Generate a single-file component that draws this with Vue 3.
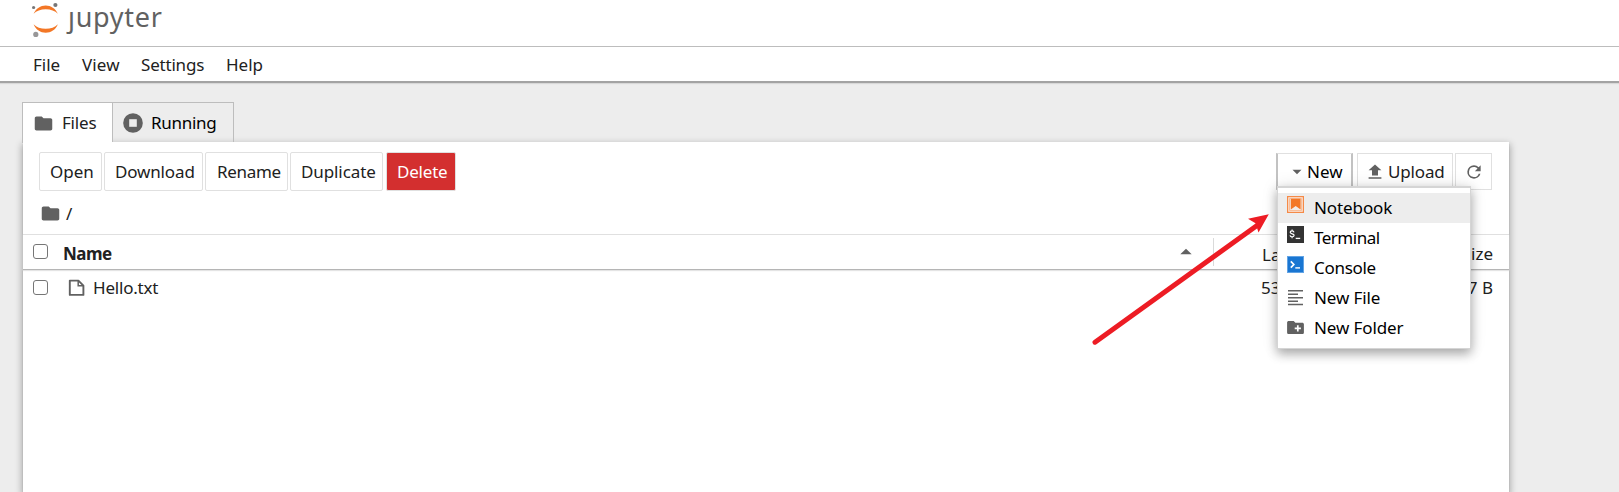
<script setup>
const menus = [
  { label: 'File', cls: 'm-file' },
  { label: 'View', cls: 'm-view' },
  { label: 'Settings', cls: 'm-settings' },
  { label: 'Help', cls: 'm-help' },
]
const actions = [
  { label: 'Open', cls: 'a-open' },
  { label: 'Download', cls: 'a-download' },
  { label: 'Rename', cls: 'a-rename' },
  { label: 'Duplicate', cls: 'a-duplicate' },
  { label: 'Delete', cls: 'a-delete' },
]
const items = [
  { label: 'Notebook', icon: 'notebook' },
  { label: 'Terminal', icon: 'terminal' },
  { label: 'Console', icon: 'console' },
  { label: 'New File', icon: 'text' },
  { label: 'New Folder', icon: 'folder' },
]
const folderPath =
  'M10 4H4c-1.1 0-1.99.9-1.99 2L2 18c0 1.1.9 2 2 2h16c1.1 0 2-.9 2-2V8c0-1.1-.9-2-2-2h-8l-2-2z'
</script>

<template>
  <div class="app">
    <header class="top">
      <svg class="logo" width="30" height="37" viewBox="0 0 30 37">
        <path d="M2.6 13.8C5 8.300 9.500 5.400 14.700 5.400S24.500 8.300 26.900 13.800C24 10.900 19.800 9.300 14.700 9.300S5.500 10.900 2.600 13.800z" fill="#f37726" />
        <path d="M2.600 24.200C5 29.800 9.500 32.700 14.700 32.700S24.500 29.800 26.900 24.200C24 27.100 19.800 28.800 14.700 28.800S5.500 27.100 2.600 24.200z" fill="#f37726" />
        <circle cx="24.400" cy="5" r="2.100" fill="#767677" />
        <circle cx="2.600" cy="7.500" r="1.600" fill="#767677" />
        <circle cx="4.800" cy="34.400" r="2.600" fill="#989798" />
      </svg>
      <span class="brand">&#x237;upyter</span>
    </header>

    <nav class="menubar">
      <span v-for="m in menus" :key="m.label" class="menu" :class="m.cls">{{ m.label }}</span>
    </nav>

    <main class="content">
      <div class="tabs">
        <div class="tab active">
          <svg width="21" height="21" viewBox="0 0 24 24"><path :d="folderPath" fill="#616161" /></svg>
          <span class="t-files">Files</span>
        </div>
        <div class="tab running">
          <svg width="20" height="20" viewBox="0 0 20 20">
            <circle cx="10" cy="10" r="9.800" fill="#616161" />
            <rect x="6.200" y="6.200" width="7.600" height="7.600" fill="#ededed" />
          </svg>
          <span class="t-running">Running</span>
        </div>
      </div>

      <section class="panel">
        <div class="toolbar">
          <button v-for="a in actions" :key="a.label" class="btn" :class="a.cls">{{ a.label }}</button>
          <div class="spacer"></div>
          <div class="right">
            <div class="btn new">
              <svg width="10" height="6" viewBox="0 0 10 6"><path d="M.500.700h9L5 5.300z" fill="#616161" /></svg>
              <span class="t-new">New</span>
              <div class="dropdown">
                <div v-for="(it, i) in items" :key="it.label" class="item" :class="{ hover: i === 0 }">
                  <svg v-if="it.icon === 'notebook'" class="ic" viewBox="0 0 17 17">
                    <rect width="17" height="17" fill="#f58a47" />
                    <rect x="1.200" y="1.200" width="14.600" height="14.600" fill="#fbe8dc" />
                    <rect x="2.200" y="2.200" width="12.600" height="12.600" fill="#f7b48b" />
                    <rect x="3" y="3" width="11" height="11" fill="#f2ebe7" />
                    <path d="M3.800 2.800h9.800v10.800L8.700 9.900 3.800 13.600z" fill="#f37726" />
                  </svg>
                  <svg v-else-if="it.icon === 'terminal'" class="ic" viewBox="0 0 17 17">
                    <rect width="17" height="17" fill="#333" />
                    <path d="M7 6.300C6.800 5.300 6.100 4.900 5.100 4.900 3.900 4.900 3.200 5.400 3.200 6.300c0 2 3.900 1 3.900 3 0 1-.8 1.500-2 1.500-1.100 0-1.900-.5-2.100-1.500M5.100 3.500v1.400M5.100 10.800v1.400" fill="none" stroke="#fff" stroke-width="1.200" />
                    <path d="M8.700 12.400h4.500" stroke="#fff" stroke-width="1.300" />
                  </svg>
                  <svg v-else-if="it.icon === 'console'" class="ic" viewBox="0 0 17 17">
                    <rect width="17" height="17" fill="#62a3e4" />
                    <rect x="1" y="1" width="15" height="15" fill="#1976d2" />
                    <path d="M3.800 5.400l3 3.100-3 3.100" fill="none" stroke="#fff" stroke-width="1.700" />
                    <path d="M8.300 11.900h4.700" stroke="#fff" stroke-width="1.400" />
                  </svg>
                  <svg v-else-if="it.icon === 'text'" class="ic" viewBox="0 0 17 17">
                    <path d="M1 1.700h15M1 5.200h10M1 8.700h15M1 12.200h10M1 15.500h15" stroke="#616161" stroke-width="1.500" />
                  </svg>
                  <svg v-else class="ic" viewBox="0 0 17 17">
                    <path d="M1.700 2h5l1.700 1.700h6.900c.9 0 1.600.7 1.600 1.600v8.200c0 .9-.7 1.600-1.600 1.600H1.700C.8 15.100.1 14.400.1 13.500V3.600C.1 2.700.8 2 1.700 2z" fill="#616161" />
                    <path d="M7.700 9.400h6.200M10.800 6.300v6.200" stroke="#fff" stroke-width="1.700" />
                  </svg>
                  <span class="label" :class="'l-' + it.icon">{{ it.label }}</span>
                </div>
              </div>
            </div>
            <div class="btn upload">
              <svg width="14" height="16" viewBox="0 0 14 16"><path d="M4 11.500h6V6.300h3.400L7 .400.600 6.300H4zM.600 13.200h12.800v1.600H.600z" fill="#616161" /></svg>
              <span class="t-upload">Upload</span>
            </div>
            <div class="btn refresh">
              <svg width="20" height="20" viewBox="0 0 24 24"><path d="M17.650 6.350A7.960 7.960 0 0 0 12 4a8 8 0 1 0 7.730 10h-2.080A6 6 0 1 1 12 6c1.660 0 3.140.690 4.220 1.780L13 11h7V4z" fill="#616161" /></svg>
            </div>
          </div>
        </div>

        <div class="crumbs">
          <svg width="21" height="21" viewBox="0 0 24 24"><path :d="folderPath" fill="#616161" /></svg>
          <span>/</span>
        </div>

        <div class="thead">
          <i class="check"></i>
          <b class="t-name">Name</b>
          <div class="spacer"></div>
          <svg class="sort" width="12" height="7" viewBox="0 0 12 7"><path d="M.300 6.200L6 .800l5.700 5.400z" fill="#616161" /></svg>
          <div class="modified">Last Modified</div>
          <div class="size">File Size</div>
        </div>
        <div class="row">
          <i class="check"></i>
          <svg class="doc" width="17" height="18" viewBox="0 0 17 18">
            <path d="M1.800 1.600h8.600l5 5v9.300H1.800z" fill="none" stroke="#616161" stroke-width="1.900" stroke-linejoin="round" />
            <path d="M10.200 2v4.800h4.800" fill="none" stroke="#616161" stroke-width="1.500" />
          </svg>
          <span class="t-hello">Hello.txt</span>
          <div class="spacer"></div>
          <div class="ago">53 seconds ago</div>
          <div class="bytes">7 B</div>
        </div>
      </section>
    </main>

    <svg class="arrow" width="184" height="138" viewBox="0 0 184 138">
      <path d="M5 132.200L167 15.500" stroke="#ed1c24" stroke-width="5" stroke-linecap="round" />
      <path d="M178.800 4.200L158 8.700l7.500 4.500 3 9.300z" fill="#ed1c24" />
    </svg>
  </div>
</template>

<style>
html, body { margin: 0; overflow: hidden; }
</style>

<style scoped>
.app { position: relative; height: 492px; background: #ededed; color: #212121; font: 17px/24px "Noto Sans", "Open Sans", sans-serif; overflow: hidden; white-space: nowrap; display: flex; flex-direction: column; }
.app * { box-sizing: border-box; }
.top { height: 47px; flex: none; background: #fff; border-bottom: 1px solid #bdbdbd; display: flex; padding-left: 31px; }
.logo { flex: none; }
.brand { margin-left: 7px; font-size: 27px; line-height: 36px; margin-top: -1px; height: 36px; color: #616161; letter-spacing: .7px; }
.menubar { height: 36px; flex: none; background: #fff; border-bottom: 2px solid #a3a3a3; display: flex; padding: 6px 0 0 23px; box-shadow: 0 1px 1px #d8d8d8; }
.menu { padding-left: 10px; flex: none; }
.m-file { width: 48px; }
.m-view { width: 60px; padding-left: 11px; letter-spacing: .1px; }
.m-settings { width: 85px; letter-spacing: -.2px; }
.content { flex: 1; padding: 19px 110px 0 22px; display: flex; flex-direction: column; }
.tabs { display: flex; height: 40px; flex: none; position: relative; z-index: 1; }
.tab { border: 1px solid #bdbdbd; border-bottom: 0; height: 40px; display: flex; align-items: center; }
.active { width: 90px; background: #fff; padding-left: 10px; border-right: 0; height: 41px; }
.active span { margin-left: 8px; letter-spacing: -.2px; }
.running { width: 122px; padding-left: 10px; color: #000; }
.running span { margin-left: 8px; letter-spacing: -.3px; }
.panel { flex: 1; margin-left: 1px; margin-right: -1px; width: 1486px; background: #fff; box-shadow: 0 3px 7px 1px rgba(0,0,0,.3), 0 2px 1px 0 rgba(0,0,0,.2); }
.toolbar { height: 58px; padding: 10px 17px 0 16px; display: flex; }
.btn { height: 39px; border: 1px solid #e0e0e0; border-radius: 2px; background: #fff; font: inherit; color: #212121; display: flex; align-items: center; padding: 0 0 0 10px; margin-right: 2px; flex: none; }
.a-open { width: 63px; }
.a-download { width: 99px; letter-spacing: -.15px; }
.a-rename { width: 83px; letter-spacing: -.3px; padding-left: 11px; }
.a-duplicate { width: 93px; margin-right: 3px; letter-spacing: -.1px; }
.a-delete { width: 70px; background: #d32f2f; color: #fff; letter-spacing: -.2px; }
.spacer { flex: 1; }
.right { display: flex; padding-top: 1px; }
.right .btn { height: 37px; border-radius: 0; }
.right .new { width: 77px; position: relative; margin-right: 4px; padding-left: 14px; color: #000; border-left: 2px solid #c2c2c2; border-right: 2px solid #c2c2c2; }
.new .t-new { margin-left: 5px; }
.right .upload { width: 96px; padding-left: 10px; }
.upload span { margin-left: 6px; letter-spacing: -.15px; }
.right .refresh { width: 37px; padding: 0; justify-content: center; margin-right: 0; }
.dropdown { position: absolute; left: -1px; top: 32px; width: 194px; height: 163px; background: #fff; border: 1px solid #d5d5d5; border-top-width: 2px; padding-top: 5px; box-shadow: 0 5px 10px rgba(0,0,0,.3), 0 0 16px rgba(0,0,0,.1); z-index: 5; }
.item { height: 30px; padding-left: 9px; display: flex; }
.hover { background: #ededed; }
.ic { width: 17px; height: 17px; margin-top: 3px; flex: none; }
.item:nth-child(n+4) .ic { margin-top: 6px; }
.label { margin-left: 10px; line-height: 30px; letter-spacing: -.1px; }
.l-terminal { letter-spacing: -.5px; }
.l-console { letter-spacing: -.3px; }
.crumbs { height: 34px; padding: 0 0 0 17px; display: flex; align-items: center; }
.crumbs svg { margin-top: -7px; }
.crumbs span { margin: -7px 0 0 5px; }
.thead { height: 36px; border-top: 1px solid #e0e0e0; border-bottom: 1px solid #b5b5b5; box-shadow: 0 1px 1px #e4e4e4; display: flex; align-items: center; padding-left: 10px; }
.check { width: 15px; height: 15px; border: 1px solid #767676; border-radius: 3px; flex: none; margin-top: -1px; }
.t-name { margin: 3px 0 0 15px; letter-spacing: -.5px; }
.sort { margin: -1px 21px 0 0; }
.modified { width: 180px; height: 28px; border-left: 1px solid #dadada; padding: 5px 0 0 48px; }
.size { width: 116px; padding: 4px 16px 0 0; text-align: right; }
.row { height: 34px; display: flex; align-items: center; padding-left: 10px; }
.row .check { margin-top: 0; }
.doc { margin: 1px 0 0 20px; }
.t-hello { margin: 1px 0 0 8px; letter-spacing: -.2px; }
.ago { width: 184px; margin-top: 1px; }
.bytes { width: 64px; padding-right: 16px; margin-top: 1px; text-align: right; }
.arrow { position: absolute; left: 1090px; top: 210px; z-index: 10; }
</style>
